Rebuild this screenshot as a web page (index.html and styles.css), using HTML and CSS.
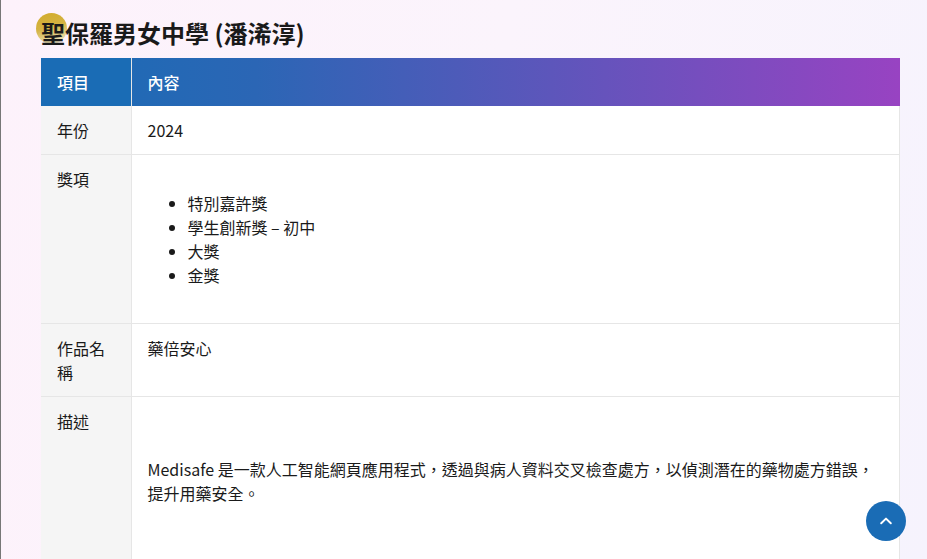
FILE: index.html
```html
<!DOCTYPE html>
<html lang="zh-Hant">
<head>
<meta charset="utf-8">
<title>聖保羅男女中學 (潘浠淳)</title>
<link rel="stylesheet" href="styles.css">
</head>
<body>
<main class="page">
  <h2 class="title">聖保羅男女中學 (潘浠淳)</h2>
  <table class="info">
    <thead>
      <tr><th class="key">項目</th><th class="val">內容</th></tr>
    </thead>
    <tbody>
      <tr><td class="key">年份</td><td class="val">2024</td></tr>
      <tr>
        <td class="key">獎項</td>
        <td class="val">
          <ul class="awards">
            <li>特別嘉許獎</li>
            <li>學生創新獎 – 初中</li>
            <li>大獎</li>
            <li>金獎</li>
          </ul>
        </td>
      </tr>
      <tr><td class="key">作品名稱</td><td class="val">藥倍安心</td></tr>
      <tr>
        <td class="key">描述</td>
        <td class="val"><p class="desc">Medisafe 是一款人工智能網頁應用程式，透過與病人資料交叉檢查處方，以偵測潛在的藥物處方錯誤，提升用藥安全。</p></td>
      </tr>
    </tbody>
  </table>
</main>
<button class="to-top" type="button" aria-label="返回頂部">
  <svg width="14" height="14" viewBox="0 0 14 14" fill="none" stroke="#fff" stroke-width="2" stroke-linecap="round" stroke-linejoin="round"><path d="M2.2 9.2 7 4.6l4.8 4.6"/></svg>
</button>
</body>
</html>
```
FILE: styles.css
```css
* { box-sizing: border-box; }
html, body { margin: 0; height: 100%; overflow: hidden; }
body {
  font-family: "Noto Sans CJK TC", "Noto Sans", sans-serif;
  font-size: 16px;
  line-height: 24px;
  color: #1a1a1a;
  background: linear-gradient(100deg, #fdf2fb 0%, #fbf4fc 50%, #f6f3fd 100%);
  border-left: 1px solid #777;
}
.page { padding: 16px 27px 0 40px; }
.title {
  position: relative;
  margin: 0 0 8px;
  font-size: 24px;
  line-height: 34px;
  font-weight: 700;
  color: #1a1a1a;
}
.title::before {
  content: "";
  position: absolute;
  left: -5px;
  top: -3px;
  width: 31px;
  height: 31px;
  border-radius: 50%;
  background: linear-gradient(165deg, #d2ab2a 0%, #d4b343 45%, #e6d69a 78%, #f8f2e4 100%);
  z-index: -1;
}
.info {
  width: 859px;
  table-layout: fixed;
  border-collapse: separate;
  border-spacing: 0;
  background: #fff;
}
.info thead tr { background: linear-gradient(90deg, #1a6cb5 0%, #2b66b5 25%, #9843c2 100%); }
.info th {
  padding: 12px 16px;
  text-align: left;
  font-weight: 500;
  color: #fff;
}
.info th.key { background: #1a6cb5; border-right: 1px solid #e6e6e6; }
.info td {
  padding: 12px 16px;
  vertical-align: top;
  border-bottom: 1px solid #e6e6e6;
  border-right: 1px solid #e6e6e6;
}
.info .key { width: 91px; }
.info .val { padding-left: 15.5px; }
.info td.key { background: #f5f5f5; }
.awards { margin: 24px 0; padding-left: 40px; }
.desc { margin: 48px 0; }
.to-top {
  position: fixed;
  right: 21px;
  bottom: 18px;
  width: 40px;
  height: 40px;
  padding: 0;
  display: flex;
  align-items: center;
  justify-content: center;
  border: 0;
  border-radius: 50%;
  background: #1a6cb5;
}
```
